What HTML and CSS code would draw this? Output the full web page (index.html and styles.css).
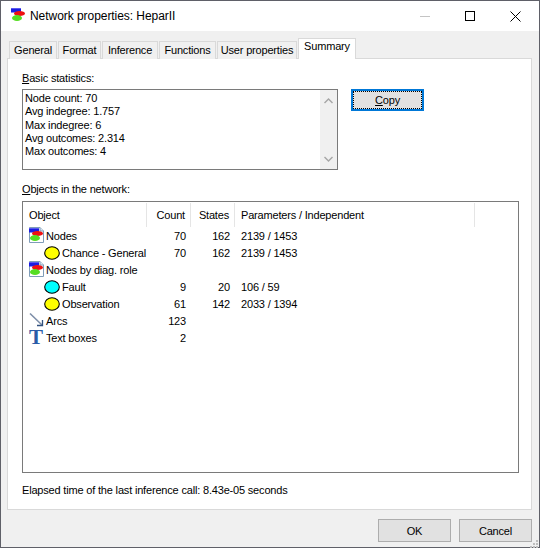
FILE: index.html
```html
<!DOCTYPE html>
<html lang="en">
<head>
<meta charset="utf-8">
<title>Network properties: HeparII</title>
<link rel="stylesheet" href="styles.css">
</head>
<body>
<svg class="defs" width="0" height="0" aria-hidden="true">
  <defs>
    <g id="net">
      <rect x="1" y="0" width="10" height="4.5" fill="#1c1ce0"/>
      <rect x="1" y="0" width="10" height="1" fill="#5a5aee"/>
      <ellipse cx="9.5" cy="5.5" rx="5.5" ry="2.5" fill="#ee1111"/>
      <ellipse cx="7" cy="10" rx="5" ry="3" fill="#55dd22"/>
    </g>
  </defs>
</svg>
<div class="window">
  <header class="titlebar">
    <svg class="app-icon" width="16" height="16" viewBox="0 0 16 16"><use href="#net"/></svg>
    <span class="title">Network properties: HeparII</span>
    <div class="controls">
      <svg class="ctl" width="10" height="10" viewBox="0 0 10 10"><rect x="0" y="5" width="10" height="1" fill="#c4c4c4"/></svg>
      <svg class="ctl" width="10" height="10" viewBox="0 0 10 10"><rect x="0.5" y="0.5" width="9" height="9" fill="none" stroke="#000"/></svg>
      <svg class="ctl" width="11" height="11" viewBox="0 0 11 11"><path d="M0.5 0.5L10.5 10.5M10.5 0.5L0.5 10.5" stroke="#000" fill="none"/></svg>
    </div>
  </header>
  <main class="client">
    <nav class="tabs">
      <div class="tab t1">General</div>
      <div class="tab t2">Format</div>
      <div class="tab t3">Inference</div>
      <div class="tab t4">Functions</div>
      <div class="tab t5">User properties</div>
      <div class="tab active">Summary</div>
    </nav>
    <section class="panel">
      <div class="label"><u>B</u>asic statistics:</div>
      <div class="stats-row">
        <div class="stats">
          <div class="stats-text">
            <div>Node count: 70</div>
            <div>Avg indegree: 1.757</div>
            <div>Max indegree: 6</div>
            <div>Avg outcomes: 2.314</div>
            <div>Max outcomes: 4</div>
          </div>
          <div class="scrollbar">
            <svg width="9" height="6" viewBox="0 0 9 6"><path d="M0.5 5L4.5 1L8.5 5" fill="none" stroke="#a6a6a6" stroke-width="1.4"/></svg>
            <svg width="9" height="6" viewBox="0 0 9 6"><path d="M0.5 1L4.5 5L8.5 1" fill="none" stroke="#a6a6a6" stroke-width="1.4"/></svg>
          </div>
        </div>
        <button class="btn copy"><span class="focus"><u>C</u>opy</span></button>
      </div>
      <div class="label objects"><u>O</u>bjects in the network:</div>
      <div class="list">
        <div class="row head">
          <div class="cell name">Object</div>
          <div class="cell num">Count</div>
          <div class="cell num">States</div>
          <div class="cell par">Parameters / Independent</div>
          <div class="cell"></div>
        </div>
        <div class="rows">
          <div class="row">
            <div class="cell name"><svg class="ic" width="18" height="17" viewBox="0 0 18 17"><path d="M1.5 0.5H12L15.5 4V15.5H1.5Z" fill="#fff" stroke="#7f9db9"/><path d="M12 0.5V4H15.5" fill="#dbe6f2" stroke="#7f9db9"/><use href="#net" y="1"/></svg>Nodes</div>
            <div class="cell num">70</div><div class="cell num">162</div><div class="cell par">2139 / 1453</div><div class="cell"></div>
          </div>
          <div class="row">
            <div class="cell name lvl"><svg class="ic oval" width="16" height="14" viewBox="0 0 16 14"><ellipse cx="8" cy="7" rx="7.3" ry="6.3" fill="#ffff00" stroke="#000" stroke-width="1.1"/></svg>Chance - General</div>
            <div class="cell num">70</div><div class="cell num">162</div><div class="cell par">2139 / 1453</div><div class="cell"></div>
          </div>
          <div class="row">
            <div class="cell name"><svg class="ic" width="18" height="17" viewBox="0 0 18 17"><path d="M1.5 0.5H12L15.5 4V15.5H1.5Z" fill="#fff" stroke="#7f9db9"/><path d="M12 0.5V4H15.5" fill="#dbe6f2" stroke="#7f9db9"/><use href="#net" y="1"/></svg>Nodes by diag. role</div>
            <div class="cell num"></div><div class="cell num"></div><div class="cell par"></div><div class="cell"></div>
          </div>
          <div class="row">
            <div class="cell name lvl"><svg class="ic oval" width="16" height="14" viewBox="0 0 16 14"><ellipse cx="8" cy="7" rx="7.3" ry="6.3" fill="#00ffff" stroke="#000" stroke-width="1.1"/></svg>Fault</div>
            <div class="cell num">9</div><div class="cell num">20</div><div class="cell par">106 / 59</div><div class="cell"></div>
          </div>
          <div class="row">
            <div class="cell name lvl"><svg class="ic oval" width="16" height="14" viewBox="0 0 16 14"><ellipse cx="8" cy="7" rx="7.3" ry="6.3" fill="#ffff00" stroke="#000" stroke-width="1.1"/></svg>Observation</div>
            <div class="cell num">61</div><div class="cell num">142</div><div class="cell par">2033 / 1394</div><div class="cell"></div>
          </div>
          <div class="row">
            <div class="cell name"><svg class="ic" width="18" height="17" viewBox="0 0 18 17"><path d="M2 1.5L14 13" stroke="#7d8ea8" stroke-width="1.6" fill="none"/><path d="M14.5 8V13.5H9" stroke="#31517f" stroke-width="1.3" fill="none"/></svg>Arcs</div>
            <div class="cell num">123</div><div class="cell num"></div><div class="cell par"></div><div class="cell"></div>
          </div>
          <div class="row">
            <div class="cell name"><span class="ic t-icon" aria-hidden="true">T</span>Text boxes</div>
            <div class="cell num">2</div><div class="cell num"></div><div class="cell par"></div><div class="cell"></div>
          </div>
        </div>
      </div>
      <div class="elapsed">Elapsed time of the last inference call: 8.43e-05 seconds</div>
    </section>
    <footer class="footer">
      <button class="btn">OK</button>
      <button class="btn">Cancel</button>
      <svg class="grip" width="9" height="9" viewBox="0 0 9 9"><g fill="#bdbdbd"><rect x="6" y="0" width="2" height="2"/><rect x="3" y="3" width="2" height="2"/><rect x="6" y="3" width="2" height="2"/><rect x="0" y="6" width="2" height="2"/><rect x="3" y="6" width="2" height="2"/><rect x="6" y="6" width="2" height="2"/></g></svg>
    </footer>
  </main>
</div>
</body>
</html>
```

FILE: styles.css
```css
* { box-sizing: border-box; }
html, body { margin: 0; padding: 0; }
body {
  width: 540px;
  height: 548px;
  overflow: hidden;
  background: #6a6a50;
  font: 11px/14px "Liberation Sans", Arial, sans-serif;
  letter-spacing: -0.18px;
  color: #000;
}
.defs { position: absolute; }
.window {
  width: 540px;
  height: 548px;
  border: 1px solid #5f6068;
  background: #f0f0f0;
  display: flex;
  flex-direction: column;
}
.titlebar {
  height: 30px;
  flex: none;
  background: #fff;
  display: flex;
  align-items: center;
  padding-left: 9px;
}
.app-icon { flex: none; }
.title {
  margin-left: 4px;
  white-space: nowrap;
  font-size: 12px;
  letter-spacing: -0.05px;
}
.controls {
  margin-left: auto;
  display: flex;
  align-items: center;
  padding-right: 18px;
  gap: 35px;
}
.ctl { display: block; }
.client {
  flex: 1;
  padding: 7px 7px 0 6px;
  display: flex;
  flex-direction: column;
  background: #f0f0f0;
}
.tabs {
  display: flex;
  align-items: flex-end;
  height: 21px;
  margin-bottom: -1px;
  position: relative;
  z-index: 1;
  padding-left: 2px;
}
.tab {
  height: 18px;
  margin-right: 1px;
  border: 1px solid #d9d9d9;
  border-bottom: none;
  background: #f0f0f0;
  text-align: center;
  line-height: 16px;
  white-space: nowrap;
}
.t1 { width: 48px; }
.t2 { width: 43px; }
.t3 { width: 56px; }
.t4 { width: 57px; }
.t5 { width: 80px; }
.tab.active {
  width: 58px;
  height: 21px;
  background: #fff;
  line-height: 15px;
}
.panel {
  height: 452px;
  border: 1px solid #d9d9d9;
  background: #fff;
  padding: 12px 11px 0 14px;
}
.label { height: 14px; white-space: nowrap; }
.stats-row {
  display: flex;
  align-items: flex-start;
  gap: 13px;
  margin-top: 4px;
}
.stats {
  width: 316px;
  height: 81px;
  border: 1px solid #7a7a7a;
  display: flex;
  justify-content: space-between;
}
.stats-text {
  padding: 2px 0 0 2px;
  line-height: 13.25px;
}
.scrollbar {
  width: 17px;
  background: #f0f0f0;
  display: flex;
  flex-direction: column;
  align-items: center;
  justify-content: space-between;
  padding: 8px 0 7px;
}
.scrollbar svg { display: block; }
.btn {
  width: 73px;
  height: 22px;
  padding: 0;
  border: 1px solid #adadad;
  background: #e1e1e1;
  color: #000;
  font: inherit;
  letter-spacing: inherit;
  text-align: center;
}
.btn.copy {
  flex: none;
  border: 2px solid #0078d7;
}
.focus {
  display: block;
  height: 18px;
  line-height: 16px;
  border: 1px dotted #000;
}
.objects { margin-top: 12px; }
.list {
  margin-top: 5px;
  width: 497px;
  height: 272px;
  border: 1px solid #7a7a7a;
  padding-top: 1px;
}
.row {
  display: grid;
  grid-template-columns: 124px 44px 44px 240px 1fr;
  height: 17px;
  align-items: center;
}
.row.head { height: 24px; }
.head .cell {
  height: 24px;
  line-height: 24px;
  border-right: 1px solid #e5e5e5;
}
.head .cell:last-child { border-right: none; }
.head .name { padding-left: 6px; }
.cell { white-space: nowrap; }
.name {
  display: flex;
  align-items: center;
  padding-left: 5px;
}
.lvl { padding-left: 21px; }
.num { text-align: right; padding-right: 5px; }
.par { padding-left: 6px; }
.ic { flex: none; display: block; }
.oval { margin-right: 2px; }
.t-icon {
  width: 18px;
  height: 17px;
  padding-left: 1px;
  font: bold 21px/17px "Liberation Serif", serif;
  color: #2a5ca8;
}
.elapsed { margin-top: 10px; white-space: nowrap; }
.footer {
  position: relative;
  display: flex;
  justify-content: flex-end;
  gap: 8px;
  margin-top: 9px;
}
.footer .btn { height: 23px; }
.grip {
  position: absolute;
  right: -7px;
  bottom: -7px;
}
```
